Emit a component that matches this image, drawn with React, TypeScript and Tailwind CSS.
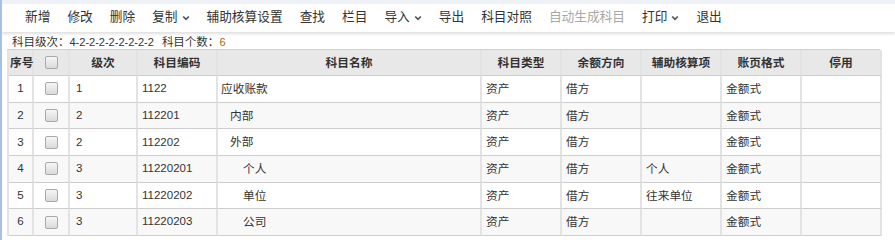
import React from "react";

const font = { fontFamily: '"Liberation Sans", "Noto Sans CJK SC", sans-serif' };

const cols = "grid grid-cols-[25px_36px_68px_80px_264px_80px_80px_80px_80px_80px]";

type Row = {
  no: number;
  level: number;
  code: string;
  name: string;
  aux: string;
};

const rows: Row[] = [
  { no: 1, level: 1, code: "1122", name: "应收账款", aux: "" },
  { no: 2, level: 2, code: "112201", name: "内部", aux: "" },
  { no: 3, level: 2, code: "112202", name: "外部", aux: "" },
  { no: 4, level: 3, code: "11220201", name: "个人", aux: "个人" },
  { no: 5, level: 3, code: "11220202", name: "单位", aux: "往来单位" },
  { no: 6, level: 3, code: "11220203", name: "公司", aux: "" },
];

const tools: { label: string; menu?: boolean; disabled?: boolean }[] = [
  { label: "新增" },
  { label: "修改" },
  { label: "删除" },
  { label: "复制", menu: true },
  { label: "辅助核算设置" },
  { label: "查找" },
  { label: "栏目" },
  { label: "导入", menu: true },
  { label: "导出" },
  { label: "科目对照" },
  { label: "自动生成科目", disabled: true },
  { label: "打印", menu: true },
  { label: "退出" },
];

function Chevron() {
  return (
    <svg width="8" height="6" viewBox="0 0 8 6" className="ml-[4px]">
      <path d="M1.2 1.5 L4 4.3 L6.8 1.5" fill="none" stroke="#555" strokeWidth="1.7" />
    </svg>
  );
}

function Check() {
  return (
    <span className="block h-[13px] w-[13px] rounded-[2px] border border-[#a9a9a9] bg-gradient-to-b from-[#f6f6f6] to-[#dadada]" />
  );
}

const cell =
  "flex items-center whitespace-nowrap border-r-2 border-b border-r-[#e3e3e3] border-b-[#cdcdcd]";

export default function App() {
  return (
    <div
      style={font}
      className="relative h-[240px] w-[895px] overflow-hidden border-l-2 border-[#a8c0e4] bg-white text-[11.7px] text-[#333]"
    >
      <div className="h-[4px] bg-[#eef1f5]" />
      <div className="relative z-10 flex h-[28px] items-center gap-[17px] bg-white pl-[23px] text-[12.7px] shadow-[0_2px_3px_rgba(0,0,0,0.13)]">
        {tools.map((t) => (
          <span
            key={t.label}
            className={`flex items-center whitespace-nowrap ${t.disabled ? "text-[#a8a8a8]" : "text-[#333]"}`}
          >
            {t.label}
            {t.menu && <Chevron />}
          </span>
        ))}
      </div>

      <div className="h-[17px] whitespace-nowrap pl-[10px] text-[11.5px] leading-[20px]">
        科目级次：<span className="text-[11px]">4-2-2-2-2-2-2-2-2</span>
        <span className="ml-[8px]">科目个数：</span>
        <span className="text-[11px] text-[#b0650a]">6</span>
      </div>

      <div className="ml-[5px] w-[873px] border-l-2 border-t border-l-[#e3e3e3] border-t-[#d0d0d0]">
        <div className={`${cols} h-[26px] bg-[#e8e8e8] font-bold`}>
          <div className={`${cell} justify-start pl-[1px]`}>序号</div>
          <div className={`${cell} justify-center`}>
            <Check />
          </div>
          <div className={`${cell} justify-center`}>级次</div>
          <div className={`${cell} justify-center`}>科目编码</div>
          <div className={`${cell} justify-center`}>科目名称</div>
          <div className={`${cell} justify-center`}>科目类型</div>
          <div className={`${cell} justify-center`}>余额方向</div>
          <div className={`${cell} justify-center`}>辅助核算项</div>
          <div className={`${cell} justify-center`}>账页格式</div>
          <div className={`${cell} justify-center`}>停用</div>
        </div>
        {rows.map((r) => (
          <div key={r.no} className={`${cols} h-[26.67px] ${r.no % 2 === 0 ? "bg-[#f8f8f8]" : "bg-white"}`}>
            <div className={`${cell} justify-center text-[11.5px]`}>{r.no}</div>
            <div className={`${cell} justify-center`}>
              <Check />
            </div>
            <div className={`${cell} pl-[6px] text-[11.5px]`}>{r.level}</div>
            <div className={`${cell} pl-[4px] text-[11.5px]`}>{r.code}</div>
            <div
              className={`${cell} ${r.level === 1 ? "pl-[3px]" : r.level === 2 ? "pl-[12px]" : "pl-[25px]"}`}
            >
              {r.name}
            </div>
            <div className={`${cell} pl-[4px]`}>资产</div>
            <div className={`${cell} pl-[4px]`}>借方</div>
            <div className={`${cell} pl-[4px]`}>{r.aux}</div>
            <div className={`${cell} pl-[4px]`}>金额式</div>
            <div className={cell} />
          </div>
        ))}
      </div>
    </div>
  );
}
